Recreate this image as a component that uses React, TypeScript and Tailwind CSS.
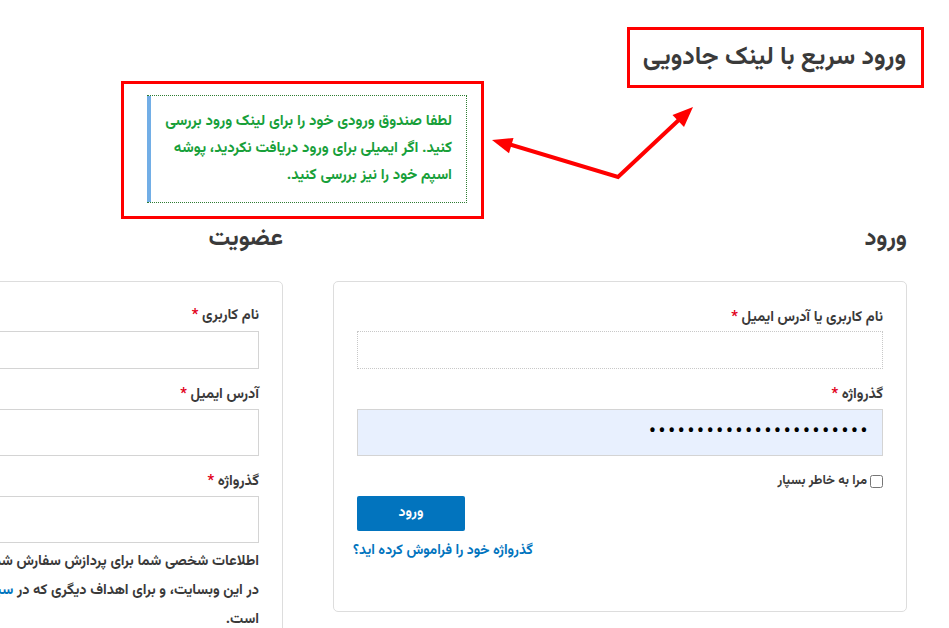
import React from "react";

const FONT = '"Vazirmatn","Noto Sans Arabic","DejaVu Sans",sans-serif';

function Label({ text }: { text: string }) {
  return (
    <label className="block text-[14.5px] leading-[20px] font-bold text-[#3a3a3a]">
      {text} <span className="text-[#e2001a]">*</span>
    </label>
  );
}

export default function App() {
  return (
    <div
      dir="rtl"
      className="relative w-[949px] h-[628px] overflow-hidden bg-white"
      style={{ fontFamily: FONT }}
    >
      {/* top section */}
      <div className="flex flex-row items-start h-[218px] pr-[25px] pt-[27px] gap-[143px]">
        <div className="shrink-0 w-[297px] h-[61px] border-[3px] border-[#ff0000] flex items-center pr-[15px]">
          <h1 className="text-[25px] font-bold text-[#3a3a3a] leading-[32px] whitespace-nowrap">
            ورود سریع با لینک جادویی
          </h1>
        </div>
        <div className="shrink-0 mt-[54px] w-[363px] h-[138px] border-[3px] border-[#ff0000] pr-[14px] pl-[23px] pt-[11px]">
          <div className="h-[108px] border border-dotted border-[#2e7d32] border-l-0 shadow-[inset_4px_0_0_#72aee6] pr-[14px] pl-[8px] pt-[12px]">
            <p className="text-[15px] leading-[27px] font-bold text-[#18a03a]">
              لطفا صندوق ورودی خود را برای لینک ورود بررسی کنید. اگر ایمیلی برای ورود دریافت نکردید، پوشه اسپم خود را نیز بررسی کنید.
            </p>
          </div>
        </div>
      </div>

      {/* columns */}
      <div className="flex flex-row mr-[42px] gap-[50px]">
        {/* login */}
        <div className="w-[574px] shrink-0">
          <h2 className="mt-[6px] mb-[27px] text-[24px] leading-[30px] font-bold text-[#3a3a3a]">ورود</h2>
          <div className="border border-[#dddddd] rounded-[5px] px-[23px] pt-[26px] pb-[50px]">
            <Label text="نام کاربری یا آدرس ایمیل" />
            <input
              className="block w-full h-[38px] mt-[3px] border border-dotted border-[#c8c8c8] bg-white outline-none"
              type="text"
            />
            <div className="mt-[16px]">
              <Label text="گذرواژه" />
            </div>
            <input
              className="block w-full h-[47px] mt-[4px] border border-[#d4d4d4] bg-[#e8f0fe] outline-none px-[12px] text-[22px] tracking-[2.2px] text-black"
              type="password"
              readOnly
              value="aaaaaaaaaaaaaaaaaaaaaaa"
            />
            <div className="mt-[15px] h-[20px] flex flex-row items-center gap-[3px]">
              <input type="checkbox" className="w-[13px] h-[13px] m-0" />
              <span className="text-[13px] font-bold text-[#3a3a3a] leading-[20px]">مرا به خاطر بسپار</span>
            </div>
            <div className="mt-[5px] flex flex-row justify-end">
              <button className="w-[108px] h-[35px] bg-[#0274be] rounded-[2px] text-white text-[14px] font-bold">
                ورود
              </button>
            </div>
            <div className="mt-[10px] flex flex-row justify-end">
              <a className="text-[14px] leading-[20px] font-bold text-[#0274be] -ml-[4px]" href="#">
                گذرواژه خود را فراموش کرده اید؟
              </a>
            </div>
          </div>
        </div>

        {/* register */}
        <div className="w-[574px] shrink-0">
          <h2 className="mt-[6px] mb-[27px] text-[24px] leading-[30px] font-bold text-[#3a3a3a]">عضویت</h2>
          <div className="border border-[#dddddd] rounded-[5px] px-[23px] pt-[24px] pb-[40px]">
            <Label text="نام کاربری" />
            <input
              className="block w-full h-[38px] mt-[5px] border border-[#d4d4d4] bg-white outline-none"
              type="text"
            />
            <div className="mt-[16px]">
              <Label text="آدرس ایمیل" />
            </div>
            <input
              className="block w-full h-[47px] mt-[4px] border border-[#d4d4d4] bg-white outline-none"
              type="email"
            />
            <div className="mt-[16px]">
              <Label text="گذرواژه" />
            </div>
            <input
              className="block w-full h-[47px] mt-[4px] border border-[#d4d4d4] bg-white outline-none"
              type="password"
            />
            <p className="mt-[4px] text-[14.5px] leading-[29px] font-bold text-[#3a3a3a] whitespace-nowrap">
              اطلاعات شخصی شما برای پردازش سفارش شما استفاده می‌شود، و پشتیبانی از تجربه شما
              <br />
              در این وبسایت، و برای اهداف دیگری که در{" "}
              <a href="#" className="text-[#0274be]">سیاست حفظ حریم خصوصی</a> توضیح داده شده
              <br />
              است.
            </p>
          </div>
        </div>
      </div>

      {/* annotation arrow */}
      <svg
        className="absolute inset-0 pointer-events-none"
        width="949"
        height="628"
        viewBox="0 0 949 628"
      >
        <polyline
          points="505,143 618,177 682,117"
          fill="none"
          stroke="#ff0000"
          strokeWidth="4"
          strokeLinejoin="miter"
        />
        <polygon points="492,140 513.5,138 509,153.3" fill="#ff0000" />
        <polygon points="693,107 684,127 672.5,115" fill="#ff0000" />
      </svg>
    </div>
  );
}
